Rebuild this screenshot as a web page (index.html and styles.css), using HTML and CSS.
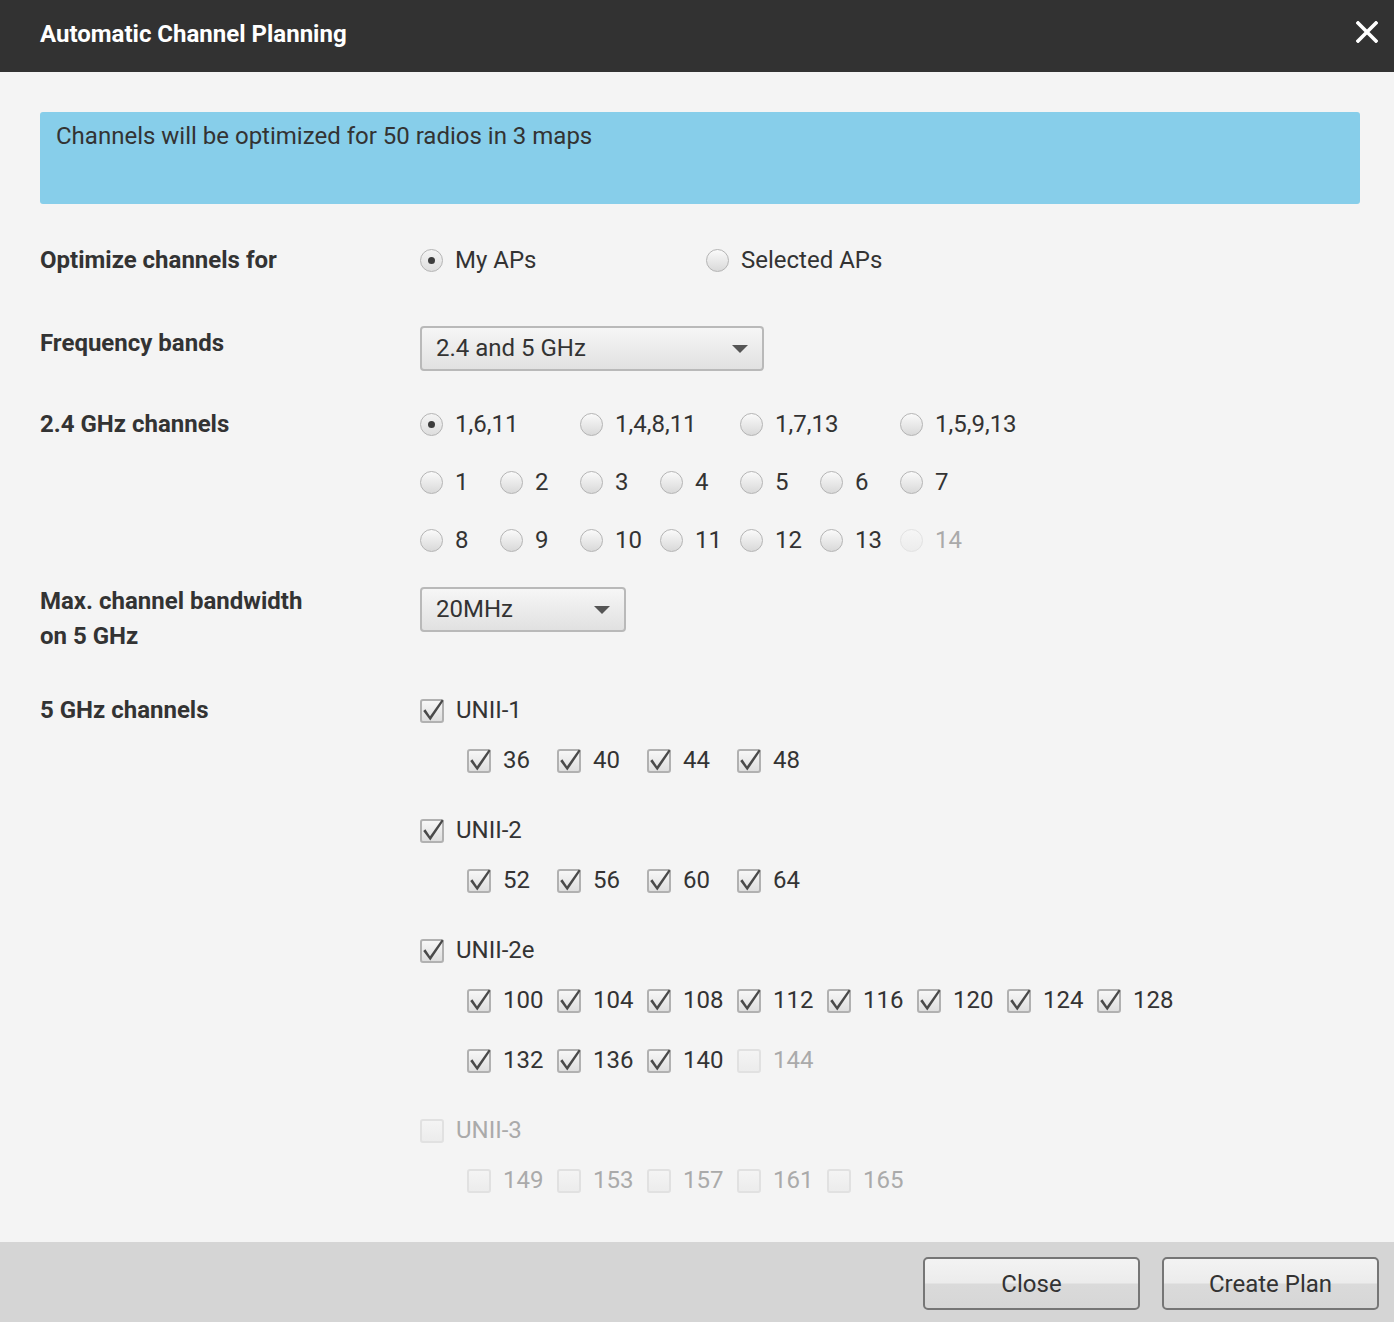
FILE: index.html
```html
<!DOCTYPE html>
<html lang="en">
<head>
  <meta charset="UTF-8" />
  <title>Automatic Channel Planning</title>
  <link rel="stylesheet" href="styles.css">
</head>
<body>
  <div class="dialog">
    <header class="dialog-head">
      <h1>Automatic Channel Planning</h1>
      <button class="close-x" aria-label="Close">
        <svg width="22" height="22" viewBox="0 0 22 22"><path d="M2 2L20 20M20 2L2 20" stroke="#fff" stroke-width="3.6" stroke-linecap="square"/></svg>
      </button>
    </header>

    <div class="dialog-body">
      <div class="banner">Channels will be optimized for 50 radios in 3 maps</div>

      <div class="row row-target">
        <div class="label">Optimize channels for</div>
        <div class="controls">
          <div class="opts opts-wide">
            <label class="radio checked"><span class="dot"></span>My APs</label>
            <label class="radio"><span class="dot"></span>Selected APs</label>
          </div>
        </div>
      </div>

      <div class="row row-bands">
        <div class="label">Frequency bands</div>
        <div class="controls">
          <div class="select select-bands">2.4 and 5 GHz<span class="caret"></span></div>
        </div>
      </div>

      <div class="row row-24">
        <div class="label">2.4 GHz channels</div>
        <div class="controls stack-24">
          <div class="opts opts-sets">
            <label class="radio checked"><span class="dot"></span>1,6,11</label>
            <label class="radio"><span class="dot"></span>1,4,8,11</label>
            <label class="radio"><span class="dot"></span>1,7,13</label>
            <label class="radio"><span class="dot"></span>1,5,9,13</label>
          </div>
          <div class="opts opts-single">
            <label class="radio"><span class="dot"></span>1</label>
            <label class="radio"><span class="dot"></span>2</label>
            <label class="radio"><span class="dot"></span>3</label>
            <label class="radio"><span class="dot"></span>4</label>
            <label class="radio"><span class="dot"></span>5</label>
            <label class="radio"><span class="dot"></span>6</label>
            <label class="radio"><span class="dot"></span>7</label>
          </div>
          <div class="opts opts-single">
            <label class="radio"><span class="dot"></span>8</label>
            <label class="radio"><span class="dot"></span>9</label>
            <label class="radio"><span class="dot"></span>10</label>
            <label class="radio"><span class="dot"></span>11</label>
            <label class="radio"><span class="dot"></span>12</label>
            <label class="radio"><span class="dot"></span>13</label>
            <label class="radio disabled"><span class="dot"></span>14</label>
          </div>
        </div>
      </div>

      <div class="row row-width">
        <div class="label">Max. channel bandwidth<br>on 5 GHz</div>
        <div class="controls">
          <div class="select select-width">20MHz<span class="caret"></span></div>
        </div>
      </div>

      <div class="row row-5">
        <div class="label">5 GHz channels</div>
        <div class="controls" id="bands5"></div>
      </div>
    </div>

    <footer class="dialog-foot">
      <button class="btn">Close</button>
      <button class="btn">Create Plan</button>
    </footer>
  </div>

  <script>
    // 5 GHz sub-bands; channels listed in rows of up to 8
    const groups = [
      { name: "UNII-1", on: true, rows: [[36, 40, 44, 48]] },
      { name: "UNII-2", on: true, rows: [[52, 56, 60, 64]] },
      { name: "UNII-2e", on: true, rows: [[100, 104, 108, 112, 116, 120, 124, 128], [132, 136, 140, 144]], off: [144] },
      { name: "UNII-3", on: false, disabled: true, rows: [[149, 153, 157, 161, 165]] }
    ];

    const tick = '<svg class="tick" width="26" height="27" viewBox="0 0 26 27"><path d="M3.2 13L5.4 11.3L10 18.2L21.8 1.4L23.6 2.8L10.3 22.6Z" fill="#4a4a4a"/></svg>';

    function box(text, checked, disabled) {
      const cls = "check" + (checked ? " checked" : "") + (disabled ? " disabled" : "");
      return '<label class="' + cls + '"><span class="box">' + (checked ? tick : "") + '</span>' + text + '</label>';
    }

    const host = document.getElementById("bands5");
    groups.forEach(g => {
      const el = document.createElement("div");
      el.className = "band";
      let html = '<div class="band-head">' + box(g.name, g.on, g.disabled) + '</div>';
      g.rows.forEach(r => {
        html += '<div class="band-row">';
        r.forEach(ch => {
          const off = g.disabled || (g.off && g.off.includes(ch));
          html += box(ch, !off, off);
        });
        html += '</div>';
      });
      el.innerHTML = html;
      host.appendChild(el);
    });
  </script>
</body>
</html>
```

FILE: styles.css
```css
* {
  margin: 0;
  padding: 0;
  box-sizing: border-box;
}

body {
  background: #f4f4f4;
  color: #333;
  font-family: Roboto, "Liberation Sans", sans-serif;
  font-size: 24px;
}

.dialog {
  width: 1394px;
  height: 1322px;
  display: flex;
  flex-direction: column;
}

/* Title bar */
.dialog-head {
  height: 72px;
  background: #323232;
  display: flex;
  align-items: center;
  justify-content: space-between;
  padding: 0 16px 4px 40px;
}

.dialog-head h1 {
  color: #fff;
  font-size: 24px;
  font-weight: 700;
}

.close-x {
  background: none;
  border: 0;
  width: 22px;
  height: 22px;
  margin-bottom: 4px;
  cursor: pointer;
}

/* Content */
.dialog-body {
  flex: 1;
  padding: 40px 34px 0 40px;
}

.banner {
  height: 92px;
  background: #87ceea;
  border-radius: 3px;
  padding: 12px 16px;
  line-height: 24px;
  color: #333;
}

.row {
  display: grid;
  grid-template-columns: 380px 1fr;
  line-height: 35px;
}

.label {
  font-weight: 700;
}

.row-target { margin-top: 39px; }
.row-bands  { margin-top: 48px; }
.row-24     { margin-top: 36px; }
.row-width  { margin-top: 26px; }
.row-5      { margin-top: 39px; }

.stack-24 {
  display: flex;
  flex-direction: column;
  gap: 23px;
}

.opts {
  display: grid;
}
.opts-wide   { grid-template-columns: repeat(2, 286px); }
.opts-sets   { grid-template-columns: repeat(4, 160px); }
.opts-single { grid-template-columns: repeat(7, 80px); }

/* Radio buttons */
.radio {
  display: flex;
  align-items: center;
  gap: 12px;
  white-space: nowrap;
}

.radio .dot {
  width: 23px;
  height: 23px;
  flex: none;
  border-radius: 50%;
  border: 1.5px solid #b4b4b4;
  background: linear-gradient(#fafafa, #d9d9d9);
  display: flex;
  align-items: center;
  justify-content: center;
}

.radio.checked .dot {
  background: linear-gradient(#f4f4f4, #dedede);
}
.radio.checked .dot::after {
  content: "";
  width: 7px;
  height: 7px;
  border-radius: 50%;
  background: #3c3c3c;
}

.radio.disabled { color: #aaa; }
.radio.disabled .dot {
  border-color: #e2e2e2;
  background: linear-gradient(#f6f6f6, #ececec);
}

/* Drop-downs */
.select {
  position: relative;
  height: 45px;
  line-height: 41px;
  padding: 0 14px;
  border: 2px solid #b9b9b9;
  border-radius: 4px;
  background: linear-gradient(#f6f6f6, #e1e1e1);
}
.select-bands { width: 344px; }
.select-width { width: 206px; margin-top: 3px; }

.caret {
  position: absolute;
  right: 14px;
  top: 17px;
  border-left: 8px solid transparent;
  border-right: 8px solid transparent;
  border-top: 8px solid #555;
}

/* Checkbox groups */
.band + .band { margin-top: 35px; }

.band-row {
  display: grid;
  grid-template-columns: repeat(8, 90px);
  padding-left: 47px;
  margin-top: 15px;
}
.band-row + .band-row { margin-top: 25px; }

.check {
  display: flex;
  align-items: center;
  gap: 12px;
  white-space: nowrap;
}

.check .box {
  position: relative;
  width: 24px;
  height: 24px;
  flex: none;
  border: 2px solid #b1b1b1;
  border-radius: 3px;
  background: linear-gradient(#f7f7f7, #dedede);
}

.check .tick {
  position: absolute;
  left: -2px;
  top: -3px;
}

.check.disabled { color: #aaa; }
.check.disabled .box {
  border-color: #e1e1e1;
  background: linear-gradient(#f4f4f4, #ececec);
}

/* Button bar */
.dialog-foot {
  height: 80px;
  background: #d5d5d5;
  display: flex;
  justify-content: flex-end;
  align-items: flex-start;
  gap: 22px;
  padding: 15px 15px 0 0;
}

.btn {
  width: 217px;
  height: 53px;
  font-family: inherit;
  font-size: 24px;
  color: #333;
  border: 2px solid #767676;
  border-radius: 5px;
  background: linear-gradient(#f3f3f3 0%, #ececec 48%, #dadada 52%, #d6d6d6 100%);
  cursor: pointer;
}
```
